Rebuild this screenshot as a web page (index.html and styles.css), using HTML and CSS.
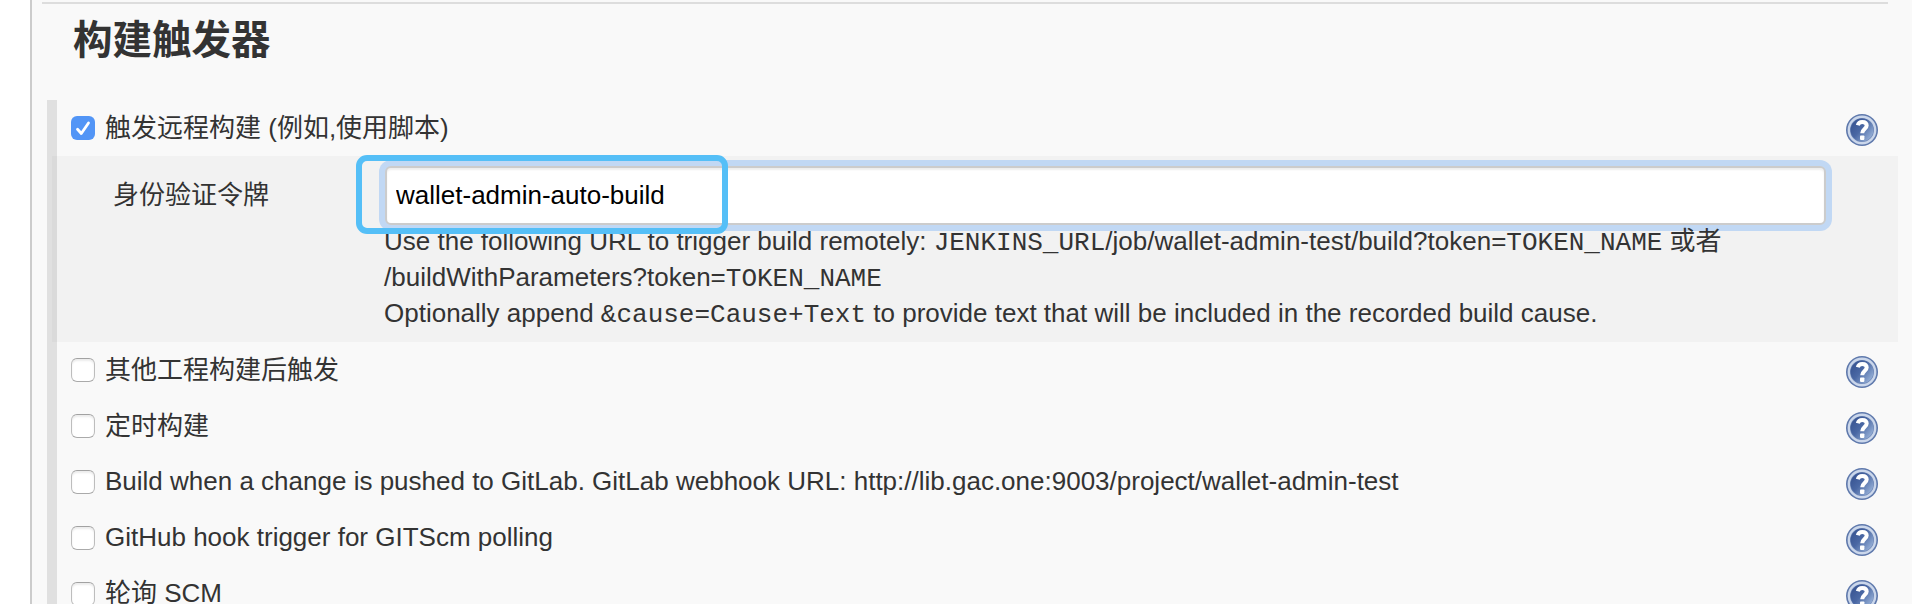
FILE: index.html
```html
<!DOCTYPE html>
<html lang="zh-CN">
<head>
<meta charset="utf-8">
<title>构建触发器</title>
<link rel="stylesheet" href="styles.css">
</head>
<body>
<svg class="defs" width="0" height="0" aria-hidden="true">
  <defs>
    <linearGradient id="disc" x1="0" y1="0.1" x2="1" y2="0.9">
      <stop offset="0" stop-color="#35518f"/>
      <stop offset="0.45" stop-color="#4a68a4"/>
      <stop offset="1" stop-color="#a3bce0"/>
    </linearGradient>
    <symbol id="help" viewBox="0 0 32 32">
      <circle cx="16" cy="16" r="16" fill="#5f79ac"/>
      <circle cx="16" cy="16" r="13.200" fill="#6d86b6" stroke="#cbd7eb" stroke-width="2.400"/>
      <circle cx="16" cy="16" r="11.400" fill="url(#disc)"/>
      <path d="M11.800 11.200C12.400 8.800 14.200 8 16.200 8c2.800 0 4.500 1.400 4.500 3.600 0 3.400-4.500 3.600-4.500 7.600" fill="none" stroke="#fff" stroke-width="4"/>
      <rect x="14" y="21.500" width="4.400" height="4.400" rx="0.800" fill="#fff"/>
    </symbol>
  </defs>
</svg>
<main class="panel">
  <hr class="rule">
  <h1 class="title">构建触发器</h1>
  <section class="triggers">
    <div class="row">
      <span class="check checked"><svg viewBox="0 0 24 24"><path d="M6.500 13.200l3.800 4.300L17.500 7"/></svg></span>
      <label class="label cjk">触发远程构建 (例如,使用脚本)</label>
      <svg class="help"><use href="#help"/></svg>
    </div>
    <div class="details">
      <div class="name">身份验证令牌</div>
      <div class="setting">
        <input class="token" type="text" value="wallet-admin-auto-build">
        <div class="highlight"></div>
        <p class="hint">Use the following URL to trigger build remotely: <code>JENKINS_URL</code>/job/wallet-admin-test/build?token=<code>TOKEN_NAME</code> 或者<br>/buildWithParameters?token=<code>TOKEN_NAME</code><br>Optionally append <code>&amp;cause=Cause+Text</code> to provide text that will be included in the recorded build cause.</p>
      </div>
    </div>
    <div class="row">
      <span class="check"></span>
      <label class="label cjk">其他工程构建后触发</label>
      <svg class="help"><use href="#help"/></svg>
    </div>
    <div class="row">
      <span class="check"></span>
      <label class="label cjk">定时构建</label>
      <svg class="help"><use href="#help"/></svg>
    </div>
    <div class="row">
      <span class="check"></span>
      <label class="label">Build when a change is pushed to GitLab. GitLab webhook URL: http://lib.gac.one:9003/project/wallet-admin-test</label>
      <svg class="help"><use href="#help"/></svg>
    </div>
    <div class="row">
      <span class="check"></span>
      <label class="label">GitHub hook trigger for GITScm polling</label>
      <svg class="help"><use href="#help"/></svg>
    </div>
    <div class="row">
      <span class="check"></span>
      <label class="label">轮询 SCM</label>
      <svg class="help"><use href="#help"/></svg>
    </div>
  </section>
</main>
</body>
</html>
```
FILE: styles.css
```css
* {
  box-sizing: border-box;
}

body {
  margin: 0;
  height: 604px;
  overflow: hidden;
  background: #fff;
  color: #333;
  font: 26px/36px "Liberation Sans", "Noto Sans CJK SC", sans-serif;
}

.defs {
  position: absolute;
}

.panel {
  height: 604px;
  margin-left: 30px;
  padding-top: 2px;
  border-left: 2px solid #ccc;
  background: #f9f9f9;
  overflow: hidden;
}

.rule {
  height: 2px;
  margin: 0 24px 0 10px;
  border: 0;
  background: #ddd;
}

.title {
  height: 96px;
  margin: 0;
  padding: 6px 0 0 41px;
  font-size: 39.5px;
  line-height: 60px;
  font-weight: 700;
}

.triggers {
  margin-left: 15px;
  border-left: 10px solid #e0e0e0;
}

.row {
  display: flex;
  align-items: flex-start;
  height: 56px;
  padding: 0 34px 0 14px;
}

.check {
  flex: none;
  width: 24px;
  height: 24px;
  margin-top: 16px;
  border: 1px solid #bdbdbd;
  border-top-color: #a2a2a2;
  border-bottom-color: #aaa;
  border-radius: 6px;
  background: #fff;
  box-shadow: inset 0 2px 2px #ececec;
}

.checked {
  border: 0;
  background: #5295f6;
  box-shadow: none;
}

.checked svg {
  display: block;
  fill: none;
  stroke: #fff;
  stroke-width: 2.8;
  stroke-linecap: round;
  stroke-linejoin: round;
}

.label {
  flex: 1;
  margin-left: 10px;
  padding-top: 9px;
  white-space: nowrap;
}

.cjk {
  padding-top: 10px;
}

.help {
  flex: none;
  width: 32px;
  height: 32px;
  margin-top: 14px;
}

.details {
  display: flex;
  height: 186px;
  margin: 0 14px 0 -5px;
  background: linear-gradient(90deg, #dadada 5px, #f2f2f2 5px);
}

.name {
  width: 333px;
  padding: 21px 0 0 61px;
}

.setting {
  position: relative;
  flex: 1;
  padding: 10px 72px 0 0;
}

.token {
  display: block;
  width: 100%;
  height: 59px;
  padding: 0 10px 0 9px;
  border: 2px solid #ccc;
  border-radius: 6px;
  outline: 0;
  background: #fff;
  box-shadow: 0 0 0 6px #c1d8f4, inset 0 2px 2px #eee;
  color: #000;
  font: inherit;
}

.highlight {
  position: absolute;
  z-index: 1;
  top: -1px;
  left: -29px;
  width: 372px;
  height: 79px;
  border: 6px solid #55bff7;
  border-radius: 11px;
}

.hint {
  position: relative;
  margin: -2px 0 0 -1px;
  white-space: nowrap;
}

.hint code {
  font: 26px/1 "Liberation Mono", monospace;
}
```
